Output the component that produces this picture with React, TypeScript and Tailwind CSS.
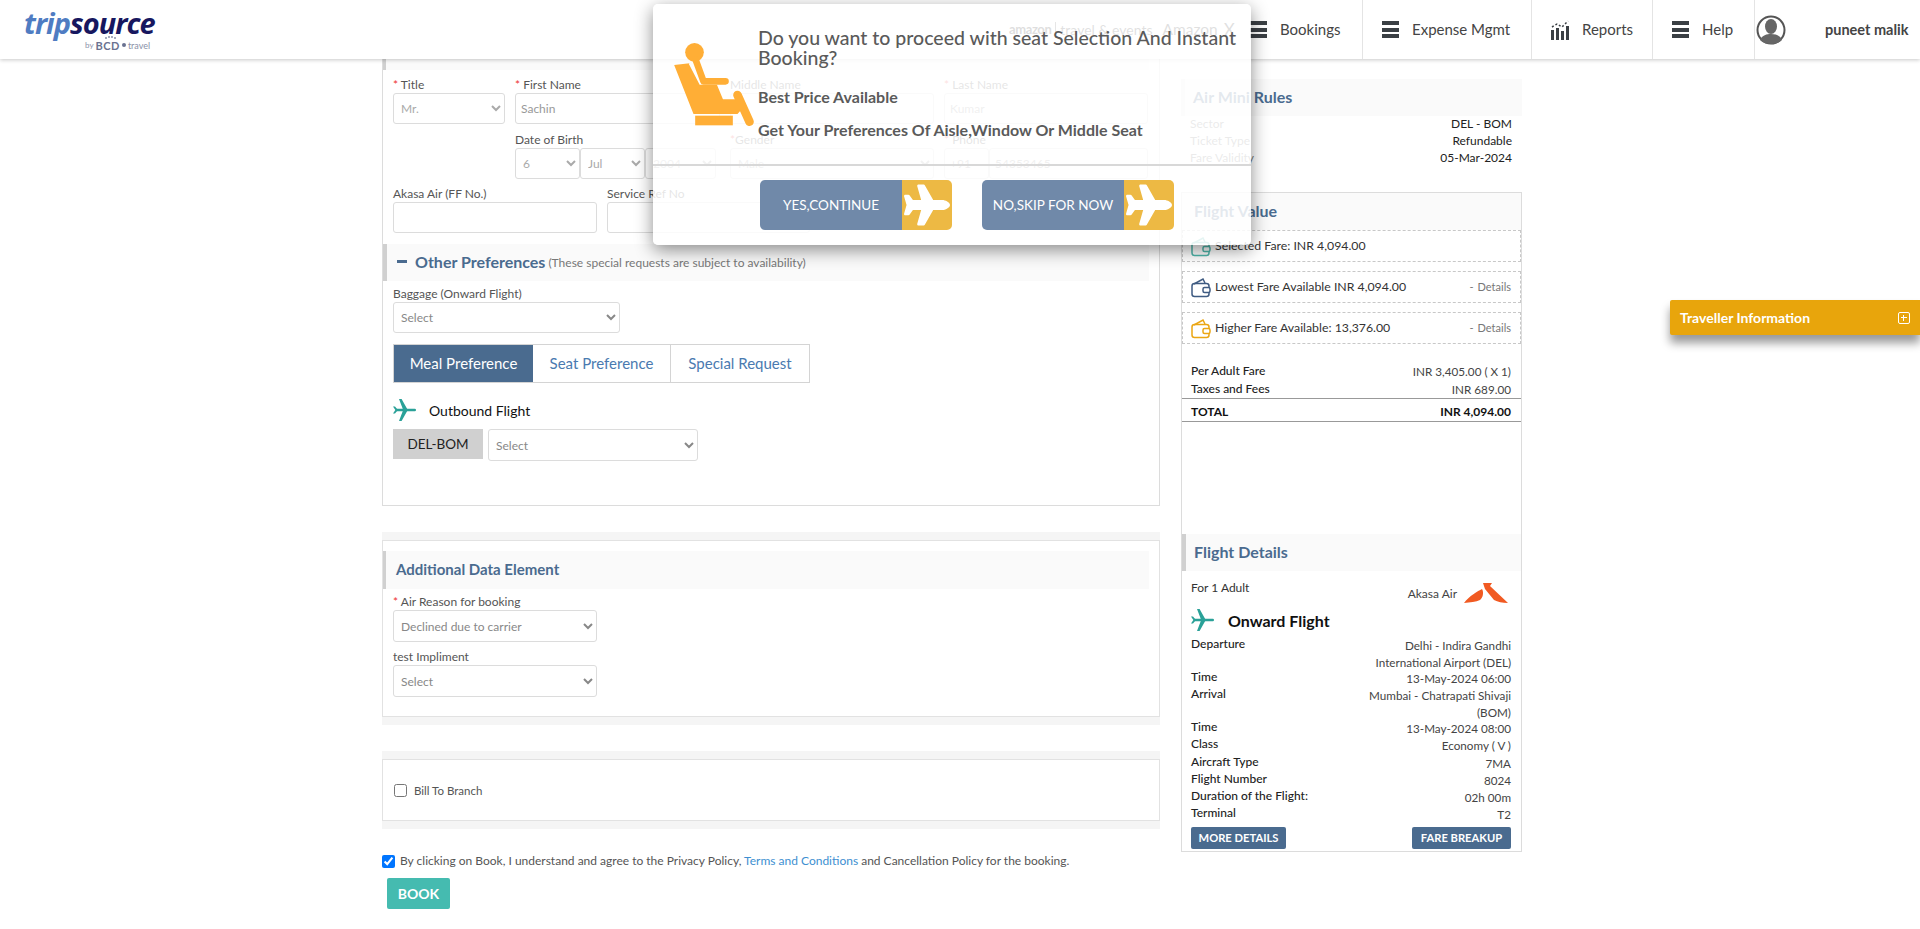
import React from "react";
import { FaPlane } from "react-icons/fa";

const font = "font-['Lato','Open_Sans',sans-serif]";

function Bars() {
  return (
    <span className="flex h-[17px] w-[17px] flex-col justify-between">
      <span className="h-[4px] bg-[#3a3f44]" />
      <span className="h-[4px] bg-[#3a3f44]" />
      <span className="h-[4px] bg-[#3a3f44]" />
    </span>
  );
}

function ChartIcon() {
  return (
    <svg width="18" height="20" viewBox="0 0 18 20" fill="#3a3f44">
      <rect x="0" y="10" width="3" height="10" />
      <rect x="5" y="8" width="3" height="12" />
      <rect x="10" y="11" width="3" height="9" />
      <rect x="15" y="6" width="3" height="14" />
      <path d="M1 7l5-3 5 3 6-6" fill="none" stroke="#3a3f44" strokeWidth="1.5" strokeDasharray="2 2" />
    </svg>
  );
}

function Avatar() {
  return (
    <svg width="30" height="30" viewBox="0 0 30 30">
      <circle cx="15" cy="15" r="13.5" fill="#fff" stroke="#555" strokeWidth="2" />
      <ellipse cx="15" cy="11.5" rx="6" ry="7.5" fill="#666" />
      <path d="M4 25c2-5 7-6 11-6s9 1 11 6c-3 3-7 4-11 4s-8-1-11-4z" fill="#666" />
    </svg>
  );
}

function NavItem({ label, icon, width, pad }: { label: string; icon: React.ReactNode; width: string; pad: string }) {
  return (
    <div className={`flex h-full items-center border-r border-[#e4e4e4] ${width} ${pad}`}>
      {icon}
      <span className="ml-[13px] text-[15px] text-[#444]">{label}</span>
    </div>
  );
}

function Logo() {
  return (
    <div className="ml-[24px] w-[130px]">
      <div className="whitespace-nowrap text-[29px] font-bold italic leading-[28px] tracking-[-1px] font-['Open_Sans',sans-serif]">
        <span className="text-[#4f7cc2]">trip</span>
        <span className="text-[#17175f]">source</span>
      </div>
      <div className="relative ml-[61px] mt-[3px] flex items-center text-[8px] leading-[11px] text-[#8a90a8]">
        <span>by</span>
        <span className="ml-[2px] text-[11px] font-bold tracking-[0.5px] text-[#6a7290]">BCD</span>
        <span className="ml-[2px] h-[4px] w-[4px] rounded-full bg-[#6a7290]" />
        <span className="ml-[2px] text-[9px]">travel</span>
        <span className="absolute left-[20px] top-[-3px] flex gap-[1px]">
          <span className="h-[2px] w-[2px] rounded-full bg-[#8a90a8]" />
          <span className="mt-[-1px] h-[2px] w-[2px] rounded-full bg-[#8a90a8]" />
          <span className="mt-[-1px] h-[2px] w-[2px] rounded-full bg-[#8a90a8]" />
          <span className="h-[2px] w-[2px] rounded-full bg-[#8a90a8]" />
        </span>
      </div>
    </div>
  );
}

function Header() {
  return (
    <header className="relative flex h-[59px] items-center bg-white shadow-[0_1px_4px_rgba(0,0,0,0.22)]">
      <Logo />
      <div className="ml-[855px] flex w-[241px] items-center">
        <span className="text-[13px] font-bold tracking-[-0.4px] text-[#222]">amazon</span>
        <span className="mx-[4px] h-[16px] w-px bg-[#555]" />
        <span className="text-[14px] text-[#333]">travel &amp; events</span>
        <span className="ml-[10px] text-[15.5px] text-[#333]">Amazon</span>
        <span className="ml-[6px] text-[17px] text-[#333]">X</span>
      </div>
      <div className="flex h-full items-center">
        <NavItem label="Bookings" icon={<Bars />} width="w-[113px]" pad="pl-[0px]" />
        <NavItem label="Expense Mgmt" icon={<Bars />} width="w-[169px]" pad="pl-[19px]" />
        <NavItem label="Reports" icon={<ChartIcon />} width="w-[121px]" pad="pl-[19px]" />
        <NavItem label="Help" icon={<Bars />} width="w-[102px]" pad="pl-[19px]" />
      </div>
      <div className="ml-[1px] flex items-center">
        <Avatar />
        <span className="ml-[39px] text-[14.5px] font-bold text-[#444]">puneet malik</span>
      </div>
    </header>
  );
}

function Label({ children, required }: { children: React.ReactNode; required?: boolean }) {
  return (
    <div className="h-[18px] text-[12px] leading-[20px] text-[#555]">
      {required && <span className="text-[#e33]">* </span>}
      {children}
    </div>
  );
}

const controlBase = "block rounded-[3px] border border-[#dcdcdc] bg-white text-[12px] outline-none";

function Select({ value, className, faint }: { value: string; className: string; faint?: boolean }) {
  return (
    <select defaultValue={value} className={`${controlBase} pl-[3px] ${faint ? "text-[#aaa]" : "text-[#888]"} ${className}`}>
      <option>{value}</option>
    </select>
  );
}

function Input({ value = "", className }: { value?: string; className: string }) {
  return <input readOnly value={value} className={`${controlBase} px-[5px] text-[#999] ${className}`} />;
}

function Stripe({ children, className = "" }: { children: React.ReactNode; className?: string }) {
  return (
    <div className={`flex h-[37px] items-center border-l-[4px] border-[#d0d0d0] bg-[#fafafa] pb-[2px] ${className}`}>
      {children}
    </div>
  );
}

function TealPlane() {
  return (
    <svg width="23" height="22" viewBox="0 0 23 22" fill="#2aa198" className="shrink-0">
      <rect x="2" y="9.8" width="21" height="2.4" rx="1.2" />
      <path d="M6 0h2.6l5.6 10H9.8zM9.8 12h4.4L8.6 22H6z" />
      <path d="M0 7.5h2l2.5 3H2zM0 14.5h2l2.5-3H2z" />
    </svg>
  );
}

function PersonPanel() {
  return (
    <section className="h-[447px] border-x border-b border-[#dcdcdc]">
      <div className="h-[11px] w-[766px] border-l-[3px] border-[#d0d0d0] bg-[#fafafa]" />
      <div className="mt-[5px] flex pl-[10px]">
        <div className="w-[122px]">
          <Label required>Title</Label>
          <Select value="Mr." faint className="h-[31px] w-[112px]" />
        </div>
        <div>
          <Label required>First Name</Label>
          <Input value="Sachin" className="h-[31px] w-[205px]" />
        </div>
        <div className="ml-[10px]">
          <Label>Middle Name</Label>
          <Input className="h-[31px] w-[204px]" />
        </div>
        <div className="ml-[10px]">
          <Label required>Last Name</Label>
          <Input value="Kumar" className="h-[31px] w-[204px]" />
        </div>
      </div>
      <div className="mt-[6px] flex pl-[132px]">
        <div className="w-[215px]">
          <Label>Date of Birth</Label>
          <div className="flex">
            <Select value="6" faint className="h-[31px] w-[65px]" />
            <Select value="Jul" faint className="h-[31px] w-[65px]" />
            <Select value="2004" faint className="h-[31px] w-[71px]" />
          </div>
        </div>
        <div className="w-[214px]">
          <Label>
            <span className="text-[#e33]">*</span>Gender
          </Label>
          <Select value="Male" faint className="h-[31px] w-[204px]" />
        </div>
        <div>
          <Label required>Phone</Label>
          <div className="flex">
            <Input value="+91" className="h-[31px] w-[45px]" />
            <Input value="54353465" className="h-[31px] w-[159px]" />
          </div>
        </div>
      </div>
      <div className="mt-[5px] flex pl-[10px]">
        <div>
          <Label>Akasa Air (FF No.)</Label>
          <Input className="h-[31px] w-[204px]" />
        </div>
        <div className="ml-[10px]">
          <Label>Service Ref No</Label>
          <Input className="h-[31px] w-[203px]" />
        </div>
      </div>
      <Stripe className="mt-[11px] w-[766px]">
        <span className="ml-[10px] h-[3px] w-[10px] bg-[#4a6b8f]" />
        <span className="ml-[8px] text-[16px] font-bold text-[#4a6b8f]">Other Preferences</span>
        <span className="ml-[3px] mt-[2px] text-[12px] text-[#777]">
          (These special requests are subject to availability)
        </span>
      </Stripe>
      <div className="pl-[10px]">
        <div className="mt-[3px]">
          <Label>Baggage (Onward Flight)</Label>
          <Select value="Select" className="h-[31px] w-[227px]" />
        </div>
        <div className="mt-[11px] flex h-[39px] w-[417px] border border-[#d4d4d4] text-[15px] text-[#4a7ab0]">
          <div className="flex w-[139px] items-center justify-center bg-[#4a6b8f] text-[#fff]">Meal Preference</div>
          <div className="flex w-[138px] items-center justify-center border-r border-[#d4d4d4]">Seat Preference</div>
          <div className="flex flex-1 items-center justify-center">Special Request</div>
        </div>
        <div className="mt-[15px] flex h-[24px] items-center">
          <TealPlane />
          <span className="ml-[13px] text-[14px] text-[#111]">Outbound Flight</span>
        </div>
        <div className="mt-[7px] flex">
          <div className="flex h-[30px] w-[90px] items-center justify-center bg-[#d0d0d0] text-[13.5px] text-[#222]">
            DEL-BOM
          </div>
          <Select value="Select" className="ml-[5px] h-[32px] w-[210px]" />
        </div>
      </div>
    </section>
  );
}

function Band({ children, className }: { children: React.ReactNode; className: string }) {
  return (
    <section className="border-y-[8px] border-[#f5f5f5]">
      <div className={`border-x border-y border-[#e2e2e2] ${className}`}>{children}</div>
    </section>
  );
}

function LeftColumn() {
  return (
    <div className="w-[778px]">
      <PersonPanel />
      <div className="mt-[26px]">
        <Band className="h-[177px] pt-[10px]">
          <div className="flex h-[38px] w-[766px] items-center border-l-[3px] border-[#d0d0d0] bg-[#fafafa] pb-[2px] pl-[10px] text-[15px] font-bold text-[#4a6b8f]">
            Additional Data Element
          </div>
          <div className="mt-[3px] pl-[10px]">
            <Label required>Air Reason for booking</Label>
            <Select value="Declined due to carrier" className="h-[32px] w-[204px]" />
            <div className="mt-[5px]">
              <Label>test Impliment</Label>
              <Select value="Select" className="h-[32px] w-[204px]" />
            </div>
          </div>
        </Band>
      </div>
      <div className="mt-[26px]">
        <Band className="flex h-[62px] items-center pl-[11px]">
          <input type="checkbox" readOnly className="h-[13px] w-[13px]" />
          <span className="ml-[7px] mt-[1px] text-[11.5px] text-[#555]">Bill To Branch</span>
        </Band>
      </div>
      <div className="mt-[23px] flex items-center">
        <input type="checkbox" readOnly checked className="h-[13px] w-[13px]" />
        <span className="ml-[5px] text-[12px] text-[#555]">
          By clicking on Book, I understand and agree to the Privacy Policy,{" "}
          <span className="text-[#3d8fd1]">Terms and Conditions</span> and Cancellation Policy for the booking.
        </span>
      </div>
      <button className="ml-[5px] mt-[8px] h-[31px] w-[63px] rounded-[2px] bg-[#45bbb0] text-[14px] font-bold text-white">
        BOOK
      </button>
    </div>
  );
}

function Wallet({ color }: { color: string }) {
  return (
    <svg width="21" height="21" viewBox="0 0 21 21" fill="none" stroke={color} strokeWidth="1.5" className="shrink-0">
      <path d="M3 7l9-5 2 4" />
      <rect x="1" y="6.5" width="17" height="13" rx="2.5" />
      <rect x="12" y="10.5" width="7" height="5" rx="1.5" fill="#fff" />
    </svg>
  );
}

function FareBox({ color, text, details, className = "" }: { color: string; text: string; details?: boolean; className?: string }) {
  return (
    <div className={`flex h-[32px] items-center border border-dashed border-[#c8c8c8] pl-[8px] pr-[9px] text-[12.3px] text-[#333] ${className}`}>
      <Wallet color={color} />
      <span className="ml-[3px]">{text}</span>
      {details && (
        <span className="ml-auto text-[11px] text-[#777]">
          <span className="mr-[4px]">-</span>Details
        </span>
      )}
    </div>
  );
}

function Row({ left, right, h }: { left: string; right: React.ReactNode; h: string }) {
  return (
    <div className={`flex justify-between pl-[9px] pr-[10px] text-[12px] text-[#222] ${h}`}>
      <span className="font-medium">{left}</span>
      <span className="mt-[1px] text-right text-[11.7px] text-[#444]">{right}</span>
    </div>
  );
}

function RuleRow({ left, right }: { left: string; right: string }) {
  return (
    <div className="flex justify-between pl-[9px] pr-[10px]">
      <span className="text-[#777]">{left}</span>
      <span className="text-[#222]">{right}</span>
    </div>
  );
}

function RightColumn() {
  return (
    <div className="ml-[21px] w-[341px]">
      <Stripe className="mt-[20px] border-[#eeeeee]">
        <span className="ml-[8px] text-[16px] font-bold text-[#4a6b8f]">Air Mini Rules</span>
      </Stripe>
      <div className="-mt-px h-[77px] text-[12px] leading-[17px]">
        <RuleRow left="Sector" right="DEL - BOM" />
        <RuleRow left="Ticket Type" right="Refundable" />
        <RuleRow left="Fare Validity" right="05-Mar-2024" />
      </div>
      <div className="h-[660px] border border-[#dcdcdc]">
        <div className="flex h-[37px] items-center bg-[#fafafa] pb-[2px] pl-[12px] text-[16px] font-bold text-[#4a6b8f]">Flight Value</div>
        <FareBox color="#4fb8ac" text="Selected Fare: INR 4,094.00" />
        <FareBox color="#3f5b82" text="Lowest Fare Available INR 4,094.00" details className="mt-[9px]" />
        <FareBox color="#eba613" text="Higher Fare Available: 13,376.00" details className="mt-[9px]" />
        <div className="mt-[18px]">
          <Row left="Per Adult Fare" right="INR 3,405.00 ( X 1)" h="h-[18px]" />
          <Row left="Taxes and Fees" right="INR 689.00" h="h-[18px]" />
          <div className="flex h-[24px] items-center justify-between border-y border-[#999] pl-[9px] pr-[10px] pt-[3px] text-[12px] font-bold text-[#111]">
            <span>TOTAL</span>
            <span>INR 4,094.00</span>
          </div>
        </div>
        <Stripe className="mt-[112px] border-[#d0d0d0]">
          <span className="ml-[8px] text-[16px] font-bold text-[#4a6b8f]">Flight Details</span>
        </Stripe>
        <div className="flex justify-between pl-[9px] pr-[12px] pt-[8px] text-[12px]">
          <span className="text-[#333]">For 1 Adult</span>
          <span className="flex items-start text-[#444]">
            <span className="mt-[6px]">Akasa Air</span>
            <svg width="46" height="20" viewBox="0 0 44 20" className="ml-[6px] mt-[4px]" fill="#f15a22">
              <path d="M0 20C5 13 14 8 18 6c2 3 1 9-2 11-4 2-10 2-16 3zM19 0h9l-2 3 18 17c-6 0-10-1-14-3L21 6z" />
            </svg>
          </span>
        </div>
        <div className="mt-[5px] flex h-[24px] items-center pl-[9px]">
          <TealPlane />
          <span className="ml-[14px] mt-[2px] text-[16px] font-bold text-[#111]">Onward Flight</span>
        </div>
        <div className="mt-[4px] leading-[16.5px]">
          <Row left="Departure" right={<>Delhi - Indira Gandhi<br />International Airport (DEL)</>} h="h-[33px]" />
          <Row left="Time" right="13-May-2024 06:00" h="h-[17px]" />
          <Row left="Arrival" right={<>Mumbai - Chatrapati Shivaji<br />(BOM)</>} h="h-[33px]" />
          <Row left="Time" right="13-May-2024 08:00" h="h-[17px]" />
          <Row left="Class" right="Economy ( V )" h="h-[18px]" />
          <Row left="Aircraft Type" right="7MA" h="h-[17px]" />
          <Row left="Flight Number" right="8024" h="h-[17px]" />
          <Row left="Duration of the Flight:" right="02h 00m" h="h-[17px]" />
          <Row left="Terminal" right="T2" h="h-[17px]" />
        </div>
        <div className="mt-[5px] flex justify-between pl-[9px] pr-[10px]">
          <button className="h-[22px] w-[95px] rounded-[2px] bg-[#4a6b8f] text-[11.2px] font-bold text-white">MORE DETAILS</button>
          <button className="h-[22px] w-[99px] rounded-[2px] bg-[#4a6b8f] text-[11.2px] font-bold text-white">FARE BREAKUP</button>
        </div>
      </div>
    </div>
  );
}

function SeatIcon() {
  return (
    <svg width="87" height="90" viewBox="60 120 260 270" fill="#ffae36" className="shrink-0">
      <circle cx="133" cy="157" r="28" />
      <path d="M72 195l46-5 32 62 52 0 18 43 38 2 14 34-10 11H130z" />
      <path d="M118 190l32 62h52l18 43h38" fill="none" stroke="#fff" strokeWidth="5" />
      <path d="M136 178l24 66h66" fill="none" stroke="#ffae36" strokeWidth="20" strokeLinecap="round" strokeLinejoin="round" />
      <path d="M262 285l36 80" fill="none" stroke="#ffae36" strokeWidth="26" strokeLinecap="round" />
      <rect x="135" y="347" width="113" height="29" />
    </svg>
  );
}

function ModalButton({ label }: { label: string }) {
  return (
    <div className="flex h-[50px] w-[192px] overflow-hidden rounded-[5px]">
      <div className="flex w-[142px] items-center justify-center bg-[#7089a9] text-[13.5px] text-white">{label}</div>
      <div className="flex flex-1 items-center justify-center bg-[#edb944] text-white">
        <FaPlane size={46} />
      </div>
    </div>
  );
}

function Modal() {
  return (
    <div className="absolute left-[653px] top-[4px] h-[241px] w-[598px] rounded-[5px] bg-white/85 shadow-[0_5px_18px_rgba(0,0,0,0.45)]">
      <div className="flex pl-[17px] pt-[36px]">
        <SeatIcon />
        <div className="-mt-[12px] ml-[1px] w-[482px] text-[#5a5a5a]">
          <div className="text-[19.5px] font-medium leading-[20px]">
            Do you want to proceed with seat Selection And Instant Booking?
          </div>
          <div className="mt-[19px] text-[16px] font-bold leading-[20px]">Best Price Available</div>
          <div className="mt-[13px] text-[16px] font-bold leading-[20px]">Get Your Preferences Of Aisle,Window Or Middle Seat</div>
        </div>
      </div>
      <div className="absolute left-0 right-0 top-[160px] h-[2px] bg-[#d8d8d8]" />
      <div className="absolute left-[107px] top-[176px] flex gap-[30px]">
        <ModalButton label="YES,CONTINUE" />
        <ModalButton label="NO,SKIP FOR NOW" />
      </div>
    </div>
  );
}

export default function App() {
  return (
    <div className={`relative h-[929px] w-[1920px] overflow-hidden bg-white ${font}`}>
      <Header />
      <main className="flex pl-[382px]">
        <LeftColumn />
        <RightColumn />
      </main>
      <Modal />
      <div className="absolute right-0 top-[300px] flex h-[35px] w-[250px] items-center justify-between rounded-l-[2px] bg-[#e8a50c] pl-[10px] pr-[10px] text-[14px] font-bold text-white shadow-[0_8px_10px_rgba(0,0,0,0.4)]">
        <span>Traveller Information</span>
        <span className="relative h-[12px] w-[12px] rounded-[2px] border border-white">
          <span className="absolute left-[2px] top-[4px] h-px w-[6px] bg-white" />
          <span className="absolute left-[4px] top-[2px] h-[6px] w-px bg-white" />
        </span>
      </div>
    </div>
  );
}
